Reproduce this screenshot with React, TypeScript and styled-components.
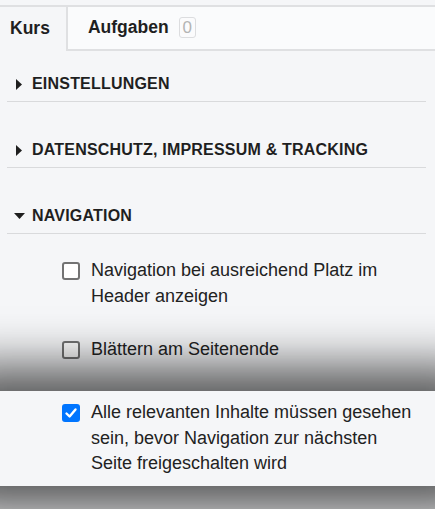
import React from "react";
import styled, { createGlobalStyle } from "styled-components";

const Global = createGlobalStyle`
  html, body {
    margin: 0;
    padding: 0;
    background: #f5f6f8;
    overflow: hidden;
    font-family: "Liberation Sans", Arial, sans-serif;
    color: #222;
  }
`;

const Page = styled.div`
  padding-top: 5px;
  min-height: 504px;
`;

const TabBar = styled.div`
  display: flex;
  border-top: 2px solid #dfe0e2;
  height: 44px;
`;

const Tab = styled.div<{ $active?: boolean }>`
  display: flex;
  align-items: center;
  gap: 10px;
  box-sizing: border-box;
  height: 44px;
  padding: 0 16px 1px ${(p) => (p.$active ? "10px" : "20px")};
  font-size: 17.5px;
  font-weight: 700;
  color: #1f1f1f;
  background: ${(p) => (p.$active ? "#f5f6f8" : "#fafbfc")};
  border-right: ${(p) => (p.$active ? "2px solid #dfe0e2" : "none")};
  border-bottom: ${(p) => (p.$active ? "none" : "2px solid #dfe0e2")};
`;

const Filler = styled.div`
  flex: 1;
  background: #fafbfc;
  border-bottom: 2px solid #dfe0e2;
`;

const Badge = styled.span`
  box-sizing: border-box;
  height: 21px;
  line-height: 19px;
  padding: 0 3px;
  border: 1px solid #dcdddf;
  border-radius: 3px;
  font-weight: 400;
  font-size: 17px;
  color: #b4b4b4;
  background: #fbfbfc;
`;

const Sections = styled.div`
  margin: 0 9px 0 7px;
  padding-top: 15px;
  display: flex;
  flex-direction: column;
  gap: 30px;
`;

const SectionHeader = styled.div`
  display: flex;
  align-items: center;
  gap: 5px;
  padding: 8px 0 7px 4px;
  border-bottom: 1px solid #d9dadc;
  font-size: 16px;
  line-height: 20px;
  font-weight: 700;
  letter-spacing: 0.2px;
  text-transform: uppercase;
  color: #1f1f1f;
`;

const CaretBox = styled.span`
  width: 16px;
  height: 20px;
  display: flex;
  align-items: center;
  justify-content: center;
`;

const Options = styled.div`
  display: flex;
  flex-direction: column;
  gap: 28px;
  padding-top: 24px;
`;

const Row = styled.label<{ $highlight?: boolean }>`
  position: relative;
  display: flex;
  align-items: flex-start;
  gap: 11px;
  font-size: 18px;
  line-height: 25.5px;
  color: #222;
  padding: ${(p) => (p.$highlight ? "9.5px 40px 9.5px 85px" : "0 10px 0 55px")};
  margin: ${(p) => (p.$highlight ? "0 -30px" : "0")};
  background: #f5f6f8;
  z-index: ${(p) => (p.$highlight ? 2 : "auto")};
  box-shadow: ${(p) => (p.$highlight ? "0 0 50px 25px rgba(0,0,0,0.65)" : "none")};
`;

const Box = styled.span<{ $checked?: boolean }>`
  flex: none;
  box-sizing: border-box;
  width: 18px;
  height: 18px;
  margin-top: 3.75px;
  border-radius: 3px;
  border: ${(p) => (p.$checked ? "none" : "2px solid #737373")};
  background: ${(p) => (p.$checked ? "#0075ff" : "#ffffff")};
  display: flex;
  align-items: center;
  justify-content: center;
`;

const Caret = ({ open }: { open?: boolean }) => (
  <CaretBox>
    {open ? (
      <svg width="11" height="6" viewBox="0 0 11 6">
        <path d="M0 0 L11 0 L5.5 6 Z" fill="#1f1f1f" />
      </svg>
    ) : (
      <svg width="6" height="11" viewBox="0 0 6 11">
        <path d="M0 0 L6 5.5 L0 11 Z" fill="#1f1f1f" />
      </svg>
    )}
  </CaretBox>
);

const Check = ({ checked }: { checked?: boolean }) => (
  <Box $checked={checked}>
    {checked && (
      <svg width="14" height="14" viewBox="0 0 14 14">
        <path
          d="M2.5 7.5 L5.6 10.5 L11.5 3.5"
          fill="none"
          stroke="#fff"
          strokeWidth="2.4"
          strokeLinecap="round"
          strokeLinejoin="round"
        />
      </svg>
    )}
  </Box>
);

export default function App() {
  return (
    <Page>
      <Global />
      <TabBar>
        <Tab $active>Kurs</Tab>
        <Tab>
          Aufgaben <Badge>0</Badge>
        </Tab>
        <Filler />
      </TabBar>
      <Sections>
        <div>
          <SectionHeader>
            <Caret />
            Einstellungen
          </SectionHeader>
        </div>
        <div>
          <SectionHeader>
            <Caret />
            Datenschutz, Impressum &amp; Tracking
          </SectionHeader>
        </div>
        <div>
          <SectionHeader>
            <Caret open />
            Navigation
          </SectionHeader>
          <Options>
            <Row>
              <Check />
              <span>Navigation bei ausreichend Platz im Header anzeigen</span>
            </Row>
            <Row>
              <Check />
              <span>Blättern am Seitenende</span>
            </Row>
            <Row $highlight>
              <Check checked />
              <span>
                Alle relevanten Inhalte müssen gesehen sein, bevor Navigation zur nächsten Seite
                freigeschalten wird
              </span>
            </Row>
          </Options>
        </div>
      </Sections>
    </Page>
  );
}
